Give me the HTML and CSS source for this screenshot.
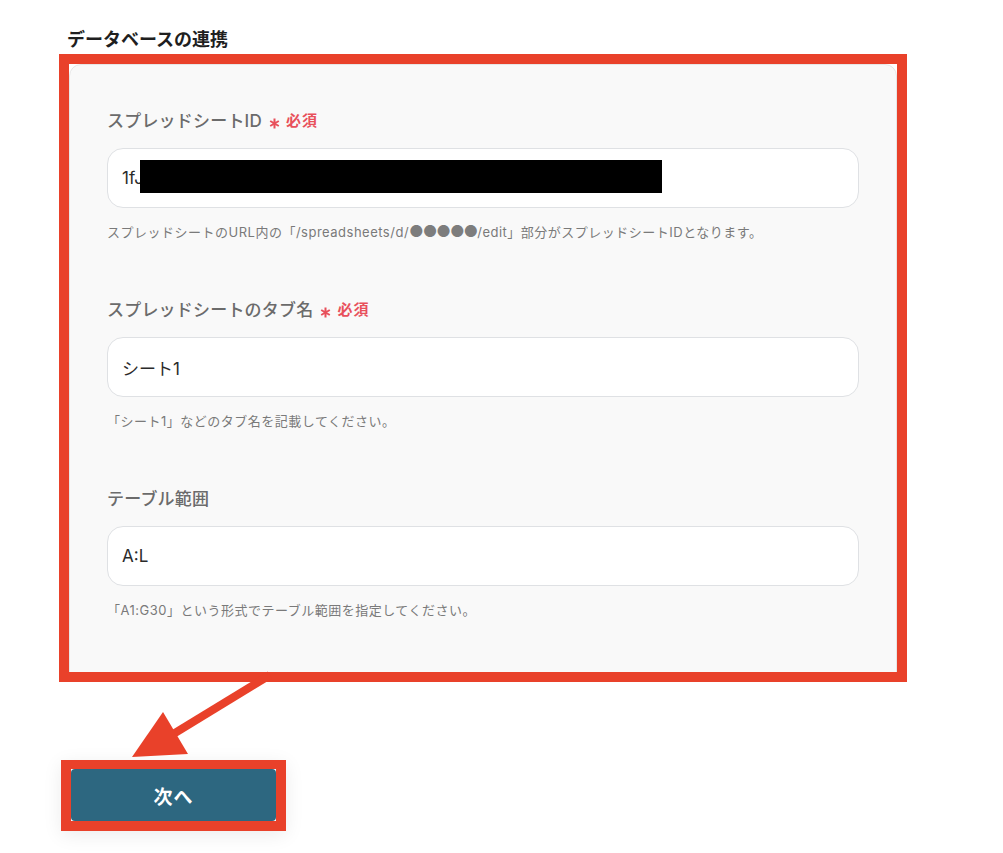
FILE: index.html
```html
<!DOCTYPE html>
<html lang="ja">
<head>
<meta charset="utf-8">
<title>データベースの連携</title>
<link rel="stylesheet" href="styles.css">
</head>
<body>
<div class="page">
  <h2 class="title">データベースの連携</h2>
  <div class="frame">
    <div class="panel">
      <div class="field">
        <div class="label">スプレッドシートID <span class="req"><svg class="ast" width="11" height="11" viewBox="0 0 11 11"><path d="M5.5 0.5V10.5M1.2 3L9.8 8M1.2 8L9.8 3" stroke="#e8505b" stroke-width="2"/></svg>必須</span></div>
        <div class="input">1fJ<span class="redact"></span></div>
        <div class="help">スプレッドシートのURL内の「/spreadsheets/d/<span class="dots">●●●●●</span>/edit」部分がスプレッドシートIDとなります。</div>
      </div>
      <div class="field">
        <div class="label">スプレッドシートのタブ名 <span class="req"><svg class="ast" width="11" height="11" viewBox="0 0 11 11"><path d="M5.5 0.5V10.5M1.2 3L9.8 8M1.2 8L9.8 3" stroke="#e8505b" stroke-width="2"/></svg>必須</span></div>
        <div class="input">シート1</div>
        <div class="help">「シート1」などのタブ名を記載してください。</div>
      </div>
      <div class="field">
        <div class="label">テーブル範囲</div>
        <div class="input">A:L</div>
        <div class="help">「A1:G30」という形式でテーブル範囲を指定してください。</div>
      </div>
    </div>
  </div>
  <div class="btn-frame">
    <button class="btn">次へ</button>
  </div>
  <svg class="arrow" width="1003" height="853" viewBox="0 0 1003 853">
    <line x1="270" y1="675" x2="170" y2="736" stroke="#e9412a" stroke-width="8"/>
    <polygon points="132,757 163,712 188,754" fill="#e9412a"/>
  </svg>
</div>
</body>
</html>
```
FILE: styles.css
```css
* { box-sizing: border-box; }
html, body { margin: 0; padding: 0; background: #ffffff; }
body {
  font-family: "Inter", "Noto Sans CJK JP", sans-serif;
  color: #222;
}
.page {
  position: relative;
  width: 1003px;
  height: 853px;
  padding-top: 28px;
}
.title {
  margin: 0 0 2px 67px;
  font-size: 18px;
  line-height: 24px;
  font-weight: 600;
  color: #1f1f1f;
}
.frame {
  margin-left: 59px;
  width: 848px;
  height: 628px;
  border: 10px solid #e9412a;
  overflow: hidden;
}
.panel {
  width: 100%;
  height: 640px;
  background: #f9f9f9;
  border: 1px solid #e6e6e6;
  border-radius: 12px;
  padding: 44px 37px 0 37px;
}
.field { margin-bottom: 57px; }
.label {
  font-size: 17px;
  line-height: 24px;
  color: #6b6b6b;
  font-weight: 500;
  letter-spacing: 0.2px;
  margin-bottom: 15px;
  display: flex;
  align-items: center;
}
.req {
  color: #e8505b;
  font-size: 15px;
  font-weight: 600;
  letter-spacing: 1px;
  display: inline-flex;
  align-items: center;
  margin-left: 7px;
}
.ast {
  margin-right: 6px;
  position: relative;
  top: 2px;
}
.input {
  position: relative;
  height: 60px;
  background: #fff;
  border: 1px solid #dfe1e4;
  border-radius: 16px;
  padding: 0 14px;
  font-size: 17px;
  color: #2a2a2a;
  display: flex;
  align-items: center;
}
.redact {
  position: absolute;
  left: 32px;
  top: 11px;
  width: 522px;
  height: 33px;
  background: #000;
}
.help {
  margin-top: 15px;
  height: 18px;
  font-size: 13px;
  line-height: 18px;
  letter-spacing: 0.5px;
  color: #7a7a7a;
}
.dots {
  font-size: 16px;
  line-height: 0;
  letter-spacing: -1px;
  color: #7d7d7d;
}
.btn-frame {
  margin: 78px 0 0 61px;
  width: 225px;
  height: 71px;
  border: 10px solid #e9412a;
  border-top-width: 9px;
  box-shadow: 0 4px 18px rgba(0,0,0,0.08);
}
.btn {
  display: block;
  width: 100%;
  height: 100%;
  border: none;
  border-radius: 4px;
  background: #2d6780;
  color: #fff;
  font-family: "Inter", "Noto Sans CJK JP", sans-serif;
  font-size: 19px;
  font-weight: 700;
  letter-spacing: 1px;
}
.arrow {
  position: absolute;
  left: 0;
  top: 0;
  pointer-events: none;
}
```
